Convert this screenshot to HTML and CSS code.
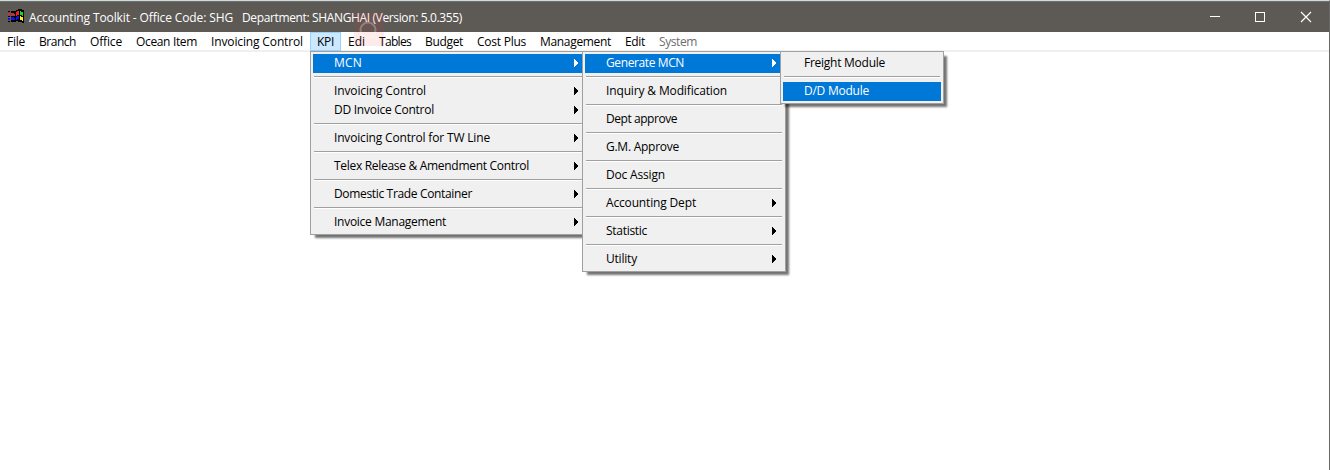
FILE: index.html
```
<!DOCTYPE html>
<html lang="en">
<head>
<meta charset="utf-8">
<title>Accounting Toolkit</title>
<link rel="stylesheet" href="styles.css">
</head>
<body>
<svg width="0" height="0" class="defs"><symbol id="arrow" viewBox="0 0 4 8"><path d="M0 0h1v1h1v1h1v1h1v2h-1v1h-1v1h-1v1h-1z" fill="currentColor" shape-rendering="crispEdges"/></symbol></svg>
<div class="window">
  <header class="titlebar">
    <svg class="logo" width="17" height="14" viewBox="0 0 17 14" shape-rendering="crispEdges">
      <path fill="#000" d="M8 1h2V0h4v1h2v13h-2v-1h-4v-1H8v1H6V2h2zM3 2h3v2H3zM3 7h3v1H3zM3 11h3v2H3zM0 2h2v1H0zM0 7h2v1H0zM0 12h2v1H0z"/>
      <path fill="#f02020" d="M0 4h2v2H0zM3 4h3v2H3zM6 5h1v2H6zM9 2h2v4H9v1H8V3h1z"/>
      <path fill="#1010f0" d="M0 9h2v2H0zM3 8h3v3H3zM6 9h1v2H6zM9 7h2v3H9v1H8V8h1z"/>
      <path fill="#10e010" d="M12 2h1v1h2v4h-1V6h-2z"/>
      <path fill="#f8f020" d="M12 7h1v1h2v4h-1v-1h-2z"/>
    </svg>
    <span class="title"><span class="fit" data-width="204">Accounting Toolkit - Office Code: SHG</span><span class="fit" data-width="220">Department: SHANGHAI (Version: 5.0.355)</span></span>
    <svg class="controls" width="104" height="12" viewBox="0 0 104 12" fill="none" stroke="#fff">
      <path d="M0 5.5h10M45.5 1.5h9v9h-9z" shape-rendering="crispEdges"/><path d="M91 1l10 10M101 1l-10 10" stroke-width="1.2"/>
    </svg>
  </header>
  <nav class="menubar">
    <span class="entry"><span class="fit" data-width="18">File</span></span>
    <span class="entry"><span class="fit" data-width="37">Branch</span></span>
    <span class="entry"><span class="fit" data-width="32">Office</span></span>
    <span class="entry"><span class="fit" data-width="61">Ocean Item</span></span>
    <span class="entry"><span class="fit" data-width="92">Invoicing Control</span></span>
    <span class="entry open"><span class="fit" data-width="17">KPI</span></span>
    <span class="entry"><span class="fit" data-width="17">Edi</span></span>
    <span class="entry"><span class="fit" data-width="32">Tables</span></span>
    <span class="entry"><span class="fit" data-width="38">Budget</span></span>
    <span class="entry"><span class="fit" data-width="49">Cost Plus</span></span>
    <span class="entry"><span class="fit" data-width="71">Management</span></span>
    <span class="entry"><span class="fit" data-width="20">Edit</span></span>
    <span class="entry disabled"><span class="fit" data-width="38">System</span></span>
  </nav>
</div>
<div class="menu menu-kpi">
  <div class="item active"><span class="fit" data-width="28">MCN</span><svg class="arrow"><use href="#arrow"/></svg></div>
  <div class="sep"></div>
  <div class="item"><span class="fit" data-width="92">Invoicing Control</span><svg class="arrow"><use href="#arrow"/></svg></div>
  <div class="item"><span class="fit" data-width="100">DD Invoice Control</span><svg class="arrow"><use href="#arrow"/></svg></div>
  <div class="sep"></div>
  <div class="item"><span class="fit" data-width="156">Invoicing Control for TW Line</span><svg class="arrow"><use href="#arrow"/></svg></div>
  <div class="sep"></div>
  <div class="item"><span class="fit" data-width="195">Telex Release &amp; Amendment Control</span><svg class="arrow"><use href="#arrow"/></svg></div>
  <div class="sep"></div>
  <div class="item"><span class="fit" data-width="138">Domestic Trade Container</span><svg class="arrow"><use href="#arrow"/></svg></div>
  <div class="sep"></div>
  <div class="item"><span class="fit" data-width="112">Invoice Management</span><svg class="arrow"><use href="#arrow"/></svg></div>
</div>
<div class="menu menu-mcn">
  <div class="item active"><span class="fit" data-width="78">Generate MCN</span><svg class="arrow"><use href="#arrow"/></svg></div>
  <div class="sep"></div>
  <div class="item"><span class="fit" data-width="121">Inquiry &amp; Modification</span></div>
  <div class="sep"></div>
  <div class="item"><span class="fit" data-width="71">Dept approve</span></div>
  <div class="sep"></div>
  <div class="item"><span class="fit" data-width="73">G.M. Approve</span></div>
  <div class="sep"></div>
  <div class="item"><span class="fit" data-width="59">Doc Assign</span></div>
  <div class="sep"></div>
  <div class="item"><span class="fit" data-width="90">Accounting Dept</span><svg class="arrow"><use href="#arrow"/></svg></div>
  <div class="sep"></div>
  <div class="item"><span class="fit" data-width="41">Statistic</span><svg class="arrow"><use href="#arrow"/></svg></div>
  <div class="sep"></div>
  <div class="item"><span class="fit" data-width="31">Utility</span><svg class="arrow"><use href="#arrow"/></svg></div>
</div>
<div class="menu menu-generate">
  <div class="item"><span class="fit" data-width="81">Freight Module</span></div>
  <div class="sep"></div>
  <div class="item active"><span class="fit" data-width="65">D/D Module</span></div>
</div>
<svg class="lens" width="30" height="33" viewBox="0 0 30 33"><rect width="30" height="33" fill="#f03030" opacity=".1"/><g fill="none" stroke="#fff" stroke-opacity=".25" stroke-width="2"><circle cx="14" cy="17" r="7.5"/><path d="M19 22l5 5" stroke-width="3"/></g></svg>
<script src="fit.js"></script>
</body>
</html>
```
FILE: styles.css
```
* { box-sizing: border-box; }
body {
  margin: 0;
  background: #fff;
  color: #000;
  font: 12px/19px "Open Sans", "Noto Sans", sans-serif;
  overflow: hidden;
}
.defs { position: absolute; }
.window {
  height: 470px;
  border-top: 1px solid #d2d9d8;
  border-right: 1px solid #6b6967;
}
.titlebar {
  display: flex;
  align-items: center;
  height: 31px;
  padding: 0 15px 0 8px;
  background: #5d5a56;
  border-top: 1px solid #687371;
  color: #fff;
}
.logo { margin-bottom: 2px; }
.title { display: flex; gap: 9px; flex: 1; margin-left: 4px; }
.fit { display: block; white-space: pre; }
.menubar {
  display: flex;
  height: 20px;
  border-bottom: 2px solid #f0f0f0;
}
.entry { padding: 0 7px; height: 19px; }
.open { background: #cce8ff; box-shadow: inset 0 0 0 1px #99d1ff; }
.disabled { color: #6d6d6d; }
.menu {
  position: absolute;
  top: 51px;
  padding: 2px;
  background: #f0f0f0;
  border: 1px solid #a0a0a0;
  box-shadow: 4px 4px 2px -1px rgba(0, 0, 0, .55);
}
.menu-kpi { left: 310px; width: 278px; }
.menu-mcn { left: 582px; width: 204px; }
.menu-generate { left: 780px; width: 164px; }
.item {
  display: flex;
  align-items: center;
  justify-content: space-between;
  height: 19px;
  padding: 0 7px 2px 21px;
}
.active { background: #0078d7; color: #fff; }
.arrow { width: 4px; height: 8px; }
.sep {
  height: 2px;
  margin: 3px 1px 4px;
  border-top: 1px solid #a0a0a0;
  border-bottom: 1px solid #fff;
}
.lens { position: absolute; left: 354px; top: 13px; }
```
FILE: fit.js
```
// Spread each label across its data-width by adjusting the letter spacing.
document.querySelectorAll('.fit').forEach(function (el) {
  el.style.width = 'max-content';
  var natural = el.getBoundingClientRect().width;
  var target = Number(el.dataset.width);
  el.style.letterSpacing = (target - natural) / el.textContent.length + 'px';
  el.style.width = target + 'px';
});
```
